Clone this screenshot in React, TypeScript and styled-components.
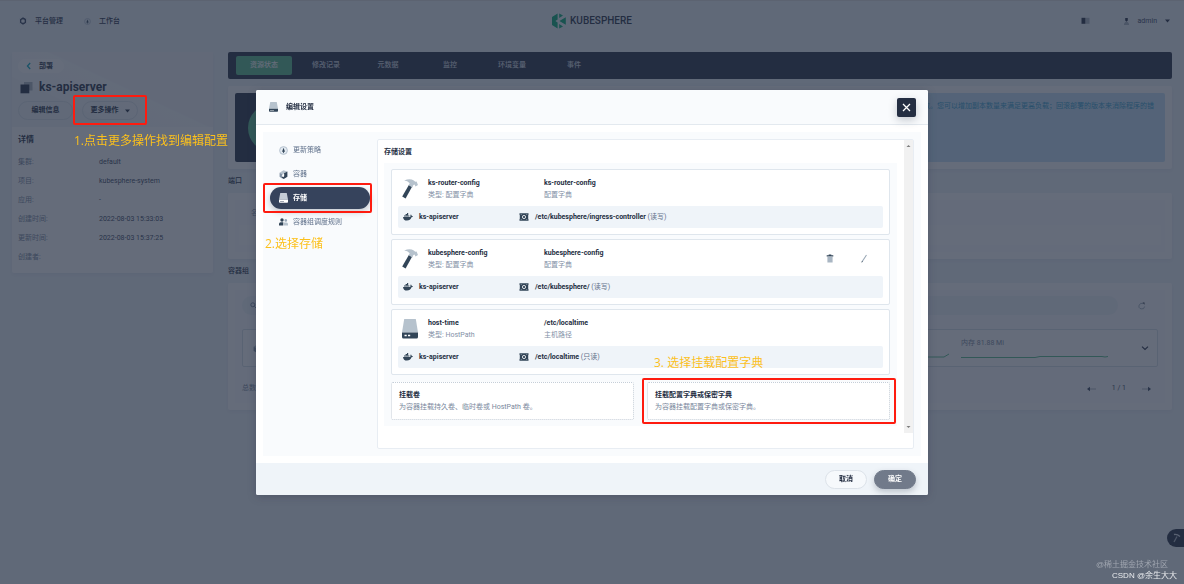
import React from "react";
import styled, { createGlobalStyle, css } from "styled-components";

const GlobalStyle = createGlobalStyle`
  *, *::before, *::after { box-sizing: border-box; }
  body {
    margin: 0;
    background: #eff4f9;
    color: #242e42;
    font-family: Roboto, "Noto Sans CJK SC", sans-serif;
    font-size: 7px;
    line-height: 11px;
  }
  button, input { font: inherit; color: inherit; }
  h1, h2, h3, p, dl, dd, ul { margin: 0; padding: 0; }
  ul { list-style: none; }
  svg { display: block; flex: none; }
`;

/* ---------- page shell ---------- */

const Page = styled.div`
  min-height: 100vh;
  border-top: 1px solid #dfe0e2;
`;

const TopBar = styled.header`
  display: grid;
  grid-template-columns: 1fr auto 1fr;
  align-items: center;
  height: 40px;
  padding: 0 14px;
`;

const TopLinks = styled.nav`
  display: flex;
  gap: 21px;
  padding-left: 5px;
`;

const TopLink = styled.a`
  display: flex;
  align-items: center;
  gap: 8px;
  color: #242e42;
  font-weight: 500;
  text-decoration: none;
`;

const Brand = styled.div`
  display: flex;
  align-items: center;
  gap: 4px;
  color: #242e42;
  font-size: 10px;
  line-height: 16px;
  font-weight: 500;
`;

const Account = styled.div`
  display: flex;
  justify-content: flex-end;
  align-items: center;
  gap: 33px;
`;

const UserButton = styled.button`
  display: flex;
  align-items: center;
  gap: 8px;
  padding: 0;
  border: 0;
  background: none;
  color: #36435c;
`;

const Columns = styled.div`
  display: grid;
  grid-template-columns: 201px minmax(0, 1fr);
  align-items: start;
  gap: 15px;
  padding: 11px 12px 0;
`;

/* ---------- left summary ---------- */

const Summary = styled.aside`
  background: #fff;
  border-radius: 2px;
  box-shadow: 0 2px 4px rgba(36, 46, 66, 0.06);
`;

const SummaryHead = styled.div`
  height: 75px;
  padding: 7px 6px 0;
  background: linear-gradient(205deg, #f3f5f9 45%, #f8fafc 46%, #f5f7fa 70%, #f0f4f8 71%);
`;

const BackLink = styled.a`
  display: inline-flex;
  align-items: center;
  gap: 6px;
  height: 14px;
  padding: 0 11px 0 7px;
  border-radius: 7px;
  background: #fff;
  color: #242e42;
  font-weight: 700;
  text-decoration: none;
`;

const ResourceName = styled.h1`
  display: flex;
  align-items: center;
  gap: 6px;
  margin-top: 5px;
  padding-left: 2px;
  font-size: 12px;
  line-height: 16px;
  font-weight: 700;
`;

const SummaryActions = styled.div`
  display: flex;
  gap: 9px;
  margin-top: 6px;
`;

const MoreAnchor = styled.div`
  position: relative;
`;

const PillButton = styled.button<{ $kind?: "ghost" | "light" | "solid"; $width: number }>`
  display: flex;
  align-items: center;
  justify-content: center;
  gap: 6px;
  width: ${(p) => p.$width}px;
  height: 19px;
  padding: 0;
  border: 1px solid #dde3ea;
  border-radius: 10px;
  background: transparent;
  font-weight: 700;
  ${(p) => p.$kind === "light" && css`background: #f6f9fc;`}
  ${(p) =>
    p.$kind === "solid" &&
    css`
      border-color: #717a8a;
      background: #717a8a;
      color: #fff;
      box-shadow: 0 3px 6px rgba(36, 46, 66, 0.25);
    `}
`;

const Details = styled.section`
  padding: 7px 6px 6px;
`;

const DetailsTitle = styled.h2`
  font-size: 8px;
  line-height: 12px;
  margin-bottom: 7px;
`;

const DetailList = styled.dl`
  display: grid;
  grid-template-columns: 81px 1fr;
  grid-auto-rows: 19px;
  align-items: center;
  color: #36435c;
  dt { color: #79879c; }
`;

/* ---------- main column ---------- */

const TabBar = styled.nav`
  display: flex;
  align-items: center;
  gap: 6px;
  height: 27px;
  padding: 0 8px;
  border-radius: 2px;
  background: #242e42;
`;

const Tab = styled.button<{ $active?: boolean }>`
  width: 56px;
  height: 19px;
  padding: 0;
  border: 0;
  border-radius: 2px;
  background: ${(p) => (p.$active ? "#55bc8a" : "transparent")};
  color: ${(p) => (p.$active ? "#fff" : "#d5dbe3")};
  font-weight: 500;
`;

const Card = styled.section`
  margin-top: 6px;
  padding: 7px;
  border-radius: 2px;
  background: #fff;
  box-shadow: 0 2px 4px rgba(36, 46, 66, 0.06);
`;

const StatusCard = styled(Card)`
  margin-top: 7px;
`;

const SectionTitle = styled.h2`
  margin-top: 7px;
  font-size: 7px;
  line-height: 11px;
  font-weight: 500;
`;

const StatusRow = styled.div`
  display: flex;
  gap: 7px;
  height: 69px;
`;

const Replica = styled.div`
  display: flex;
  align-items: center;
  justify-content: center;
  width: 74px;
  border-radius: 2px;
  background: #242e42;
`;

const ReplicaRing = styled.div`
  width: 48px;
  height: 48px;
  border-radius: 50%;
  background: #55bc8a;
`;

const Notice = styled.p`
  flex: 1;
  padding: 8px 11px;
  border-radius: 2px;
  background: #c5e2f7;
  color: #329dce;
  text-align: right;
`;

const PortBox = styled.div`
  height: 52px;
  padding: 7px 4px;
  background: #fafbfd;
`;

const PortLabel = styled.p`
  padding-left: 12px;
  line-height: 12px;
  color: #79879c;
`;

const PortRow = styled.div`
  height: 20px;
  margin-top: 6px;
  background: #fff;
`;

const PodBox = styled.div`
  padding: 6px 7px 9px;
  background: #fafbfd;
`;

const PodSearch = styled.div`
  display: flex;
  align-items: center;
  justify-content: space-between;
  padding-right: 12px;
`;

const SearchField = styled.label`
  display: flex;
  align-items: center;
  flex: 1;
  height: 19px;
  margin-right: 20px;
  padding-left: 8px;
  border-radius: 10px;
  background: #eff4f9;
  input { flex: 1; border: 0; background: none; outline: 0; padding: 0 6px; }
`;

const PodRow = styled.div`
  display: flex;
  align-items: center;
  justify-content: space-between;
  height: 38px;
  margin-top: 14px;
  padding: 0 8px 0 10px;
  border: 1px solid #d8dfe7;
  border-radius: 2px;
  background: #fff;
`;

const PodMetrics = styled.div`
  display: flex;
  align-items: center;
  gap: 33px;
`;

const Charts = styled.div`
  display: flex;
  align-items: flex-end;
  gap: 12px;
`;

const Metric = styled.div`
  color: #79879c;
`;

const PodFooter = styled.div`
  display: flex;
  justify-content: space-between;
  align-items: center;
  margin-top: 16px;
  padding-right: 7px;
  color: #79879c;
`;

const Pager = styled.div`
  display: flex;
  align-items: center;
  gap: 16px;
  color: #36435c;
`;

const IconButton = styled.button`
  display: flex;
  padding: 0;
  border: 0;
  background: none;
`;

const ToolFab = styled.button`
  position: fixed;
  right: 0;
  bottom: 37px;
  display: flex;
  align-items: center;
  width: 17px;
  height: 18px;
  padding: 0 0 0 5px;
  border: 0;
  border-radius: 9px 0 0 9px;
  background: #242e42;
`;

/* ---------- dialog ---------- */

const Overlay = styled.div`
  position: fixed;
  inset: 0;
  z-index: 10;
  display: flex;
  align-items: flex-start;
  justify-content: center;
  padding: 90px 16px 0;
  background: rgba(36, 46, 66, 0.7);
`;

const Dialog = styled.div`
  width: 100%;
  max-width: 672px;
  border-radius: 2px;
  background: #fff;
  box-shadow: 0 2px 8px rgba(36, 46, 66, 0.3);
`;

const DialogHead = styled.header`
  display: flex;
  align-items: center;
  gap: 8px;
  height: 35px;
  padding: 0 12px 0 13px;
  border-bottom: 1px solid #e3e9ef;
  border-radius: 2px 2px 0 0;
  background: #f9fbfd;
`;

const DialogTitle = styled.h2`
  flex: 1;
  font-size: 7px;
  line-height: 11px;
`;

const CloseButton = styled.button`
  display: flex;
  align-items: center;
  justify-content: center;
  width: 19px;
  height: 19px;
  padding: 0;
  border: 0;
  border-radius: 2px;
  background: #242e42;
  box-shadow: 0 3px 8px rgba(36, 46, 66, 0.25);
`;

const DialogBody = styled.div`
  display: grid;
  grid-template-columns: 100px minmax(0, 1fr);
  gap: 7px;
  margin: 7px;
  padding: 7px;
  background: #f9fbfd;
`;

const DialogFoot = styled.footer`
  display: flex;
  align-items: center;
  justify-content: flex-end;
  gap: 7px;
  height: 32px;
  padding: 0 12px;
  border-radius: 0 0 2px 2px;
  background: #eff4f9;
`;

const Steps = styled.ul`
  display: flex;
  flex-direction: column;
  gap: 2px;
`;

const Step = styled.li`
  position: relative;
`;

const StepButton = styled.button<{ $active?: boolean }>`
  display: flex;
  align-items: center;
  gap: 5px;
  width: 100%;
  height: 22px;
  padding: 0 9px;
  border: 0;
  border-radius: 11px;
  background: ${(p) => (p.$active ? "#36435c" : "transparent")};
  color: ${(p) => (p.$active ? "#fff" : "#5f708a")};
  font-weight: ${(p) => (p.$active ? 700 : 400)};
  box-shadow: ${(p) => (p.$active ? "0 3px 6px rgba(36, 46, 66, 0.25)" : "none")};
  white-space: nowrap;
`;

const Panel = styled.section`
  display: grid;
  grid-template-columns: minmax(0, 1fr) 9px;
  padding-bottom: 15px;
  border: 1px solid #e8edf3;
  border-radius: 2px;
  background: #fff;
`;

const PanelContent = styled.div`
  padding: 7px 7px 7px 6px;
`;

const PanelTitle = styled.h3`
  margin-bottom: 6px;
  font-size: 7px;
  line-height: 10px;
`;

const VolumeList = styled.div`
  display: flex;
  flex-direction: column;
  gap: 4px;
  padding: 6px 7px;
  background: #f9fbfd;
`;

const VolumeCard = styled.article`
  padding: 0 6px 6px;
  border: 1px solid #dfe6ed;
  border-radius: 2px;
  background: #fff;
`;

const VolumeHead = styled.div`
  display: grid;
  grid-template-columns: 16px 106px 1fr auto;
  align-items: center;
  column-gap: 10px;
  height: 36px;
  padding: 1px 15px 0 4px;
  line-height: 12px;
`;

const Name = styled.p`
  font-weight: 700;
  white-space: nowrap;
`;

const Hint = styled.p`
  color: #8391a7;
  white-space: nowrap;
`;

const RowActions = styled.div`
  display: flex;
  gap: 26px;
`;

const MountRow = styled.div`
  display: grid;
  grid-template-columns: 10px 106px 10px 1fr;
  align-items: center;
  height: 22px;
  padding-left: 5px;
  border-radius: 2px;
  background: #eff4f9;
  line-height: 12px;
`;

const MountText = styled.p`
  padding-left: 6px;
  font-weight: 700;
  span { color: #5f708a; font-weight: 400; }
`;

const AddRow = styled.div`
  display: grid;
  grid-template-columns: 1fr 1fr;
  gap: 13px;
  margin-top: 3px;
`;

const AddItem = styled.div`
  position: relative;
`;

const AddButton = styled.button`
  display: flex;
  flex-direction: column;
  justify-content: center;
  width: 100%;
  height: 38px;
  padding: 0 7px 1px;
  border: 1px dotted #c5ced8;
  border-radius: 2px;
  background: #fff;
  text-align: left;
  line-height: 12px;
  strong { font-weight: 700; }
  span { color: #79879c; }
`;

const Scrollbar = styled.div`
  display: flex;
  flex-direction: column;
  justify-content: space-between;
  align-items: center;
  padding: 4px 0;
  background: #f1f1f1;
`;

/* ---------- tutorial marks ---------- */

const Mark = styled.div<{ $top: number; $right: number; $bottom: number; $left: number }>`
  position: absolute;
  inset: ${(p) => `-${p.$top}px -${p.$right}px -${p.$bottom}px -${p.$left}px`};
  z-index: 20;
  border: 2px solid #fe1b0f;
  border-radius: 2px;
  pointer-events: none;
`;

const MarkLabel = styled.p<{ $place: "below" | "belowMenu" | "above" }>`
  position: absolute;
  z-index: 20;
  color: #fcc01c;
  font-size: 12px;
  line-height: 16px;
  font-weight: 400;
  font-family: "Open Sans", "Noto Sans CJK SC", sans-serif;
  white-space: nowrap;
  pointer-events: none;
  ${(p) => p.$place === "below" && css`top: 32px; left: -8px;`}
  ${(p) => p.$place === "belowMenu" && css`top: 49px; left: -5px;`}
  ${(p) => p.$place === "above" && css`top: -27px; left: 7px;`}
`;

const Watermark = styled.div`
  position: fixed;
  right: 7px;
  bottom: 3px;
  z-index: 20;
  display: flex;
  flex-direction: column;
  align-items: flex-end;
  font: 400 8px/11px "Liberation Sans", "Noto Sans CJK SC", sans-serif;
  color: #e9ebee;
  p:first-child { margin-right: 9px; color: #a0a6b0; }
`;

/* ---------- icons ---------- */

const Gear = () => (
  <svg width="8" height="8" viewBox="0 0 8 8" fill="none">
    <circle cx="4" cy="4" r="2.5" stroke="#36435c" strokeWidth="1.3" />
    <path d="M4 .4v1M4 6.6v1M.9 2.2l.9.5M6.2 5.3l.9.5M.9 5.8l.9-.5M6.2 2.7l.9-.5" stroke="#36435c" />
  </svg>
);

const Compass = ({ size = 9 }: { size?: number }) => (
  <svg width={size} height={size} viewBox="0 0 9 9">
    <circle cx="4.5" cy="4.5" r="3.9" fill="#e3eaf1" stroke="#a9b7c6" strokeWidth=".8" />
    <path d="M4.5 1.8 6 5.8H3z" fill="#324558" />
    <path d="M4.5 4.5v2.6" stroke="#324558" strokeWidth=".8" />
  </svg>
);

const Logo = () => (
  <svg width="14" height="16" viewBox="0 0 14 16" fill="#00aa72">
    <path d="M0 4 5.6.6v6L3.4 8l2.2 1.5v6L0 12z" />
    <path d="M7.2.4 11 2.6 7.2 5zM13.8 4.2v7.6L7.4 8zM7.2 11 11 13.4l-3.8 2.2z" />
  </svg>
);

const Docs = () => (
  <svg width="9" height="8" viewBox="0 0 9 8">
    <path d="M.5.8h4v6h-4z" fill="#242e42" />
    <path d="M5 .8h3.5v6H5z" fill="#abb4be" />
  </svg>
);

const Person = () => (
  <svg width="7" height="9" viewBox="0 0 7 9">
    <path d="M2.2 1h2.6v2.4L3.5 4.8 2.2 3.4z" fill="#242e42" />
    <path d="M1 8V6.4L2.4 5h2.2L6 6.4V8z" fill="#abb4be" />
  </svg>
);

const Caret = () => (
  <svg width="5" height="4" viewBox="0 0 5 4">
    <path d="M0 .5h5L2.5 3.5z" fill="#242e42" />
  </svg>
);

const Chevron = ({ dir }: { dir: "left" | "down" }) => (
  <svg width="8" height="8" viewBox="0 0 8 8" fill="none" strokeWidth="1.2">
    <path d={dir === "left" ? "M5.2 1 2.4 4l2.8 3" : "M1 2.6 4 5.4l3-2.8"} stroke={dir === "left" ? "#00aac0" : "#242e42"} />
  </svg>
);

const Layers = () => (
  <svg width="13" height="13" viewBox="0 0 13 13">
    <path d="M4 1h8.500v8.500H4z" fill="#abb4be" />
    <path d="M.5 3.500h8.800v8.800H.5z" fill="#242e42" />
  </svg>
);

const Disk = ({ w, h, light }: { w: number; h: number; light?: boolean }) => (
  <svg width={w} height={h} viewBox="0 0 16 20" preserveAspectRatio="none">
    <path d="M2.200 0h11.600L16 13.500H0z" fill={light ? "#c4ccd6" : "#b6c2cd"} />
    <path d="M0 13.500h16V18q0 1.500-1.500 1.500h-13Q0 19.500 0 18z" fill={light ? "#fff" : "#324558"} />
    <path d="M2.500 15.800h2.200v1.500H2.500zM6 15.800h2.200v1.500H6z" fill={light ? "#36435c" : "#fff"} />
  </svg>
);

const Hammer = () => (
  <svg width="16" height="20" viewBox="0 0 16 20">
    <path d="M7 5.800 10.200 7.600 3.600 19.400.2 17.500z" fill="#324558" />
    <path d="M2.200 1.600Q8-.9 11.800 1.600l1.500 1.200 1.300-.4L16 6 13.500 7.400l-1-1.800-1.100.4-1 2.400-3.800-2.200L7.700 4.200Q5.500 1.800 2.200 1.600z" fill="#b6c2cd" />
  </svg>
);

const Containers = () => (
  <svg width="9" height="9" viewBox="0 0 9 9">
    <path d="M.6 2.800 4.500.3 8.400 1.600 5 3.400 3 5z" fill="#b6c2cd" />
    <path d="M.6 2.800 3.200 4.200v4.400L.6 6.800z" fill="#7f90a3" />
    <path d="M5 3.200 8.400 1.600v5.200L4.800 8.900 3 8V6.500l2 .3z" fill="#324558" />
    <path d="M3.400 4.800v1.500h1.400V3.800" stroke="#fff" strokeWidth=".6" fill="none" />
  </svg>
);

const People = () => (
  <svg width="9" height="8" viewBox="0 0 9 8">
    <circle cx="3" cy="2" r="1.700" fill="#324558" />
    <path d="M0 7.500V6q0-1.700 1.700-1.700h2.600V7.500z" fill="#324558" />
    <circle cx="6.800" cy="2.400" r="1.300" fill="#9aa8b8" />
    <path d="M5 7.500V4.500h2.500Q9 4.500 9 6v1.500z" fill="#b6c2cd" />
  </svg>
);

const Whale = () => (
  <svg width="10" height="8" viewBox="0 0 10 8" fill="#324558">
    <path d="M0 3.900h7.200q.5-.9.200-1.800l.5-.5q.8.5.8 1.400.8-.1 1.300.3-.4.9-1.500 1Q7.300 7.600 4 7.600.3 7.600 0 3.900z" />
    <path d="M1 2.400h5.400v1.200H1zM2.600 1h2.600v1.200H2.600zM4 0h1.200v1H4z" />
  </svg>
);

const MountIcon = () => (
  <svg width="10" height="8" viewBox="0 0 10 8">
    <path d="M.5.300h9v1.500l-.3.500v3.400l.3.500v1.500h-9V6.200l.3-.5V2.300l-.3-.5z" fill="#324558" />
    <circle cx="5" cy="4" r="1.600" fill="none" stroke="#fff" strokeWidth=".8" />
    <path d="M1.800 1.500h.8M7.400 1.500h.8M1.800 6.500h.8M7.400 6.500h.8" stroke="#fff" strokeWidth=".5" />
  </svg>
);

const Trash = () => (
  <svg width="8" height="9" viewBox="0 0 8 9">
    <path d="M.7 1.300h2V.5h2.600v.8h2v1.200H.7z" fill="#324558" />
    <path d="M1.400 2.700h5.200v5.800H1.400z" fill="#a9b6c3" />
  </svg>
);

const Pen = () => (
  <svg width="8" height="9" viewBox="0 0 8 9" fill="none">
    <path d="M2.200 7.500 6.500 1" stroke="#9aa8b6" strokeWidth="1.100" />
    <path d="M1.800 8.400 2.400 7" stroke="#324558" strokeWidth=".8" />
  </svg>
);

const Magnifier = () => (
  <svg width="7" height="7" viewBox="0 0 7 7" fill="none" stroke="#79879c">
    <circle cx="2.800" cy="2.800" r="2" />
    <path d="M4.300 4.300 6.500 6.500" />
  </svg>
);

const Refresh = () => (
  <svg width="8" height="8" viewBox="0 0 8 8" fill="none">
    <path d="M5 1.600A2.800 2.800 0 1 0 6.600 4.500" stroke="#9aa8b6" strokeWidth=".9" />
    <path d="M4.500.5h2v2.200z" fill="#242e42" />
  </svg>
);

const Arrow = ({ flip }: { flip?: boolean }) => (
  <svg width="9" height="6" viewBox="0 0 9 6">
    <g transform={flip ? "rotate(180 4.500 3)" : undefined}>
      <path d="M3 3h6" stroke="#abb4be" />
      <path d="M0 3 3 .8v4.400z" fill="#36435c" />
    </g>
  </svg>
);

const ScrollArrow = ({ up }: { up?: boolean }) => (
  <svg width="5" height="4" viewBox="0 0 5 4">
    <path d={up ? "M.5 3h4L2.500 1z" : "M.5 1h4L2.500 3z"} fill="#7d7d7d" />
  </svg>
);

/* ---------- data ---------- */

const tabs = ["资源状态", "修改记录", "元数据", "监控", "环境变量", "事件"];

const details = [
  ["集群:", "default"],
  ["项目:", "kubesphere-system"],
  ["应用:", "-"],
  ["创建时间:", "2022-08-03 15:33:03"],
  ["更新时间:", "2022-08-03 15:37:25"],
  ["创建者:", ""],
];

const volumes = [
  { name: "ks-router-config", type: "配置字典", source: "ks-router-config", kind: "配置字典", path: "/etc/kubesphere/ingress-controller", mode: "读写" },
  { name: "kubesphere-config", type: "配置字典", source: "kubesphere-config", kind: "配置字典", path: "/etc/kubesphere/", mode: "读写", actions: true },
  { name: "host-time", type: "HostPath", source: "/etc/localtime", kind: "主机路径", path: "/etc/localtime", mode: "只读", disk: true },
];

export default function App() {
  return (
    <>
      <GlobalStyle />
      <Page>
        <TopBar>
          <TopLinks>
            <TopLink href="#platform"><Gear />平台管理</TopLink>
            <TopLink href="#workbench"><Compass size={7} />工作台</TopLink>
          </TopLinks>
          <Brand><Logo />KUBESPHERE</Brand>
          <Account>
            <IconButton aria-label="文档"><Docs /></IconButton>
            <UserButton><Person />admin<Caret /></UserButton>
          </Account>
        </TopBar>

        <Columns>
          <Summary>
            <SummaryHead>
              <BackLink href="#deployments"><Chevron dir="left" />部署</BackLink>
              <ResourceName><Layers />ks-apiserver</ResourceName>
              <SummaryActions>
                <PillButton $width={55}>编辑信息</PillButton>
                <MoreAnchor>
                  <PillButton $width={56}>更多操作<Caret /></PillButton>
                  <Mark $top={6} $right={9} $bottom={5} $left={9} />
                  <MarkLabel $place="below">1.点击更多操作找到编辑配置</MarkLabel>
                </MoreAnchor>
              </SummaryActions>
            </SummaryHead>
            <Details>
              <DetailsTitle>详情</DetailsTitle>
              <DetailList>
                {details.map(([label, value]) => (
                  <React.Fragment key={label}>
                    <dt>{label}</dt>
                    <dd>{value}</dd>
                  </React.Fragment>
                ))}
              </DetailList>
            </Details>
          </Summary>

          <main>
            <TabBar>
              {tabs.map((t, i) => <Tab key={t} $active={i === 0}>{t}</Tab>)}
            </TabBar>
            <StatusCard>
              <StatusRow>
                <Replica><ReplicaRing /></Replica>
                <Notice>数。您可以增加副本数量来满足更高负载；回滚部署的版本来消除程序的错</Notice>
              </StatusRow>
            </StatusCard>
            <SectionTitle>端口</SectionTitle>
            <Card>
              <PortBox>
                <PortLabel>名称</PortLabel>
                <PortRow />
              </PortBox>
            </Card>
            <SectionTitle>容器组</SectionTitle>
            <Card>
              <PodBox>
                <PodSearch>
                  <SearchField><Magnifier /><input aria-label="搜索" /></SearchField>
                  <IconButton aria-label="刷新"><Refresh /></IconButton>
                </PodSearch>
                <PodRow>
                  <Containers />
                  <PodMetrics>
                    <Charts>
                      <svg width="60" height="6" viewBox="0 0 60 6" fill="none">
                        <path d="M0 4h55l5-3" stroke="#55bc8a" />
                      </svg>
                      <Metric>
                        内存 81.88 Mi
                        <svg width="147" height="10" viewBox="0 0 147 10" fill="none">
                          <path d="M0 8.500h74l5-1h62l3 .5 3-.5" stroke="#55bc8a" />
                        </svg>
                      </Metric>
                    </Charts>
                    <IconButton aria-label="展开"><Chevron dir="down" /></IconButton>
                  </PodMetrics>
                </PodRow>
                <PodFooter>
                  <span>总数: 1</span>
                  <Pager>
                    <IconButton aria-label="上一页"><Arrow /></IconButton>
                    1 / 1
                    <IconButton aria-label="下一页"><Arrow flip /></IconButton>
                  </Pager>
                </PodFooter>
              </PodBox>
            </Card>
          </main>
        </Columns>
        <ToolFab aria-label="工具箱">
          <svg width="9" height="10" viewBox="0 0 9 10" fill="none">
            <path d="M2 9 5 3.500" stroke="#abb4be" strokeWidth="1.300" />
            <path d="M2 1.500Q5 .8 8 3.500" stroke="#d5dbe3" strokeWidth="1.300" />
          </svg>
        </ToolFab>
      </Page>

      <Overlay>
        <Dialog role="dialog" aria-labelledby="dialog-title">
          <DialogHead>
            <Disk w={9} h={10} />
            <DialogTitle id="dialog-title">编辑设置</DialogTitle>
            <CloseButton aria-label="关闭">
              <svg width="9" height="9" viewBox="0 0 9 9" stroke="#fff" strokeWidth="1.300">
                <path d="m1 1 7 7M8 1 1 8" />
              </svg>
            </CloseButton>
          </DialogHead>
          <DialogBody>
            <Steps>
              <Step><StepButton><Compass />更新策略</StepButton></Step>
              <Step><StepButton><Containers />容器</StepButton></Step>
              <Step>
                <StepButton $active><Disk w={9} h={10} light />存储</StepButton>
                <Mark $top={4} $right={2} $bottom={4} $left={7} />
                <MarkLabel $place="belowMenu">2.选择存储</MarkLabel>
              </Step>
              <Step><StepButton><People />容器组调度规则</StepButton></Step>
            </Steps>
            <Panel>
              <PanelContent>
                <PanelTitle>存储设置</PanelTitle>
                <VolumeList>
                  {volumes.map((v) => (
                    <VolumeCard key={v.name}>
                      <VolumeHead>
                        {v.disk ? <Disk w={16} h={20} /> : <Hammer />}
                        <div><Name>{v.name}</Name><Hint>类型: {v.type}</Hint></div>
                        <div><Name>{v.source}</Name><Hint>{v.kind}</Hint></div>
                        {v.actions && (
                          <RowActions>
                            <IconButton aria-label="删除"><Trash /></IconButton>
                            <IconButton aria-label="编辑"><Pen /></IconButton>
                          </RowActions>
                        )}
                      </VolumeHead>
                      <MountRow>
                        <Whale />
                        <MountText>ks-apiserver</MountText>
                        <MountIcon />
                        <MountText>{v.path} <span>({v.mode})</span></MountText>
                      </MountRow>
                    </VolumeCard>
                  ))}
                  <AddRow>
                    <AddItem>
                      <AddButton>
                        <strong>挂载卷</strong>
                        <span>为容器挂载持久卷、临时卷或 HostPath 卷。</span>
                      </AddButton>
                    </AddItem>
                    <AddItem>
                      <AddButton>
                        <strong>挂载配置字典或保密字典</strong>
                        <span>为容器挂载配置字典或保密字典。</span>
                      </AddButton>
                      <Mark $top={4} $right={6} $bottom={4} $left={5} />
                      <MarkLabel $place="above">3. 选择挂载配置字典</MarkLabel>
                    </AddItem>
                  </AddRow>
                </VolumeList>
              </PanelContent>
              <Scrollbar><ScrollArrow up /><ScrollArrow /></Scrollbar>
            </Panel>
          </DialogBody>
          <DialogFoot>
            <PillButton $kind="light" $width={42}>取消</PillButton>
            <PillButton $kind="solid" $width={42}>确定</PillButton>
          </DialogFoot>
        </Dialog>
      </Overlay>

      <Watermark>
        <p>@稀土掘金技术社区</p>
        <p>CSDN @余生大大</p>
      </Watermark>
    </>
  );
}
